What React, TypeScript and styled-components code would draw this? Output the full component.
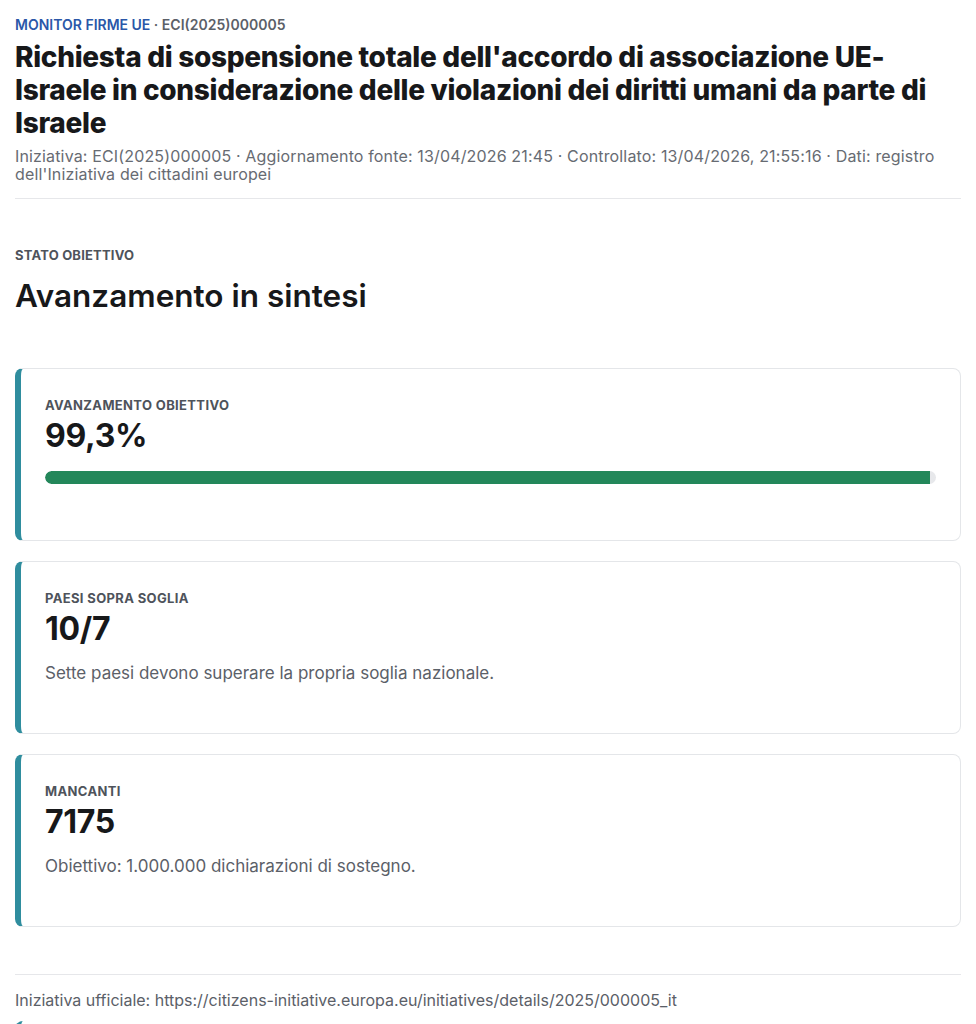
import styled, { createGlobalStyle } from 'styled-components';

const GlobalStyle = createGlobalStyle`
  body {
    margin: 0;
    background: #ffffff;
    font-family: Inter, "Noto Sans", sans-serif;
    color: #17181a;
  }
`;

const Page = styled.div`
  padding: 16px 15px 0 15px;
`;

const Eyebrow = styled.div`
  font-size: 14px;
  font-weight: 600;
  color: #5b6068;
  line-height: 18px;
  span { color: #2a57a8; }
`;

const Title = styled.h1`
  margin: 7px 0 0;
  font-size: 28px;
  font-weight: 800;
  line-height: 33px;
  letter-spacing: -0.3px;
  color: #17181a;
`;

const Meta = styled.p`
  margin: 7px 0 0;
  font-size: 16px;
  line-height: 18px;
  letter-spacing: 0.15px;
  color: #676b72;
`;

const Divider = styled.hr`
  border: 0;
  border-top: 1px solid #e6e7ea;
  margin: 15px 0 0;
`;

const Section = styled.section`
  margin-top: 48px;
`;

const Kicker = styled.div`
  font-size: 13px;
  font-weight: 700;
  color: #4e535b;
  line-height: 16px;
  letter-spacing: 0.2px;
`;

const SectionTitle = styled.h2`
  margin: 14px 0 0;
  font-size: 31.5px;
  font-weight: 600;
  line-height: 38px;
  color: #17181a;
`;

const Cards = styled.div`
  display: flex;
  flex-direction: column;
  gap: 20px;
  margin-top: 53px;
`;

const Card = styled.div`
  min-height: 173px;
  box-sizing: border-box;
  border: 1px solid #e4e6e9;
  border-left: 6px solid #2f8d9e;
  border-radius: 8px;
  padding: 28px 24px 24px 24px;
  background: #fff;
`;

const Label = styled.div`
  font-size: 13px;
  font-weight: 700;
  color: #4e535b;
  line-height: 16px;
  letter-spacing: 0.35px;
  text-transform: uppercase;
`;

const Value = styled.div`
  margin-top: 4px;
  font-size: 32px;
  font-weight: 700;
  line-height: 38px;
  letter-spacing: -0.3px;
  color: #17181a;
`;

const Track = styled.div`
  margin-top: 16px;
  height: 13px;
  border-radius: 7px;
  background: #e7e8eb;
  overflow: hidden;
`;

const Fill = styled.div`
  height: 100%;
  background: #23875a;
  border-radius: 7px 0 0 7px;
`;

const Desc = styled.p`
  margin: 14px 0 0;
  font-size: 17px;
  line-height: 22px;
  color: #5b6068;
`;

const Footer = styled.footer`
  margin-top: 47px;
  border-top: 1px solid #e6e7ea;
  padding-top: 16px;
  font-size: 16px;
  line-height: 18px;
  color: #5b6068;
`;

const NextCard = styled.div`
  margin-top: 12px;
  height: 40px;
  border-left: 6px solid #2f8d9e;
  border-radius: 8px 0 0 0;
`;

const stats = [
  { label: 'Paesi sopra soglia', value: '10/7', desc: 'Sette paesi devono superare la propria soglia nazionale.' },
  { label: 'Mancanti', value: '7175', desc: 'Obiettivo: 1.000.000 dichiarazioni di sostegno.' },
];

export default function App() {
  const progress = 99.3;
  return (
    <>
      <GlobalStyle />
      <Page>
        <Eyebrow><span>MONITOR FIRME UE</span> · ECI(2025)000005</Eyebrow>
        <Title>Richiesta di sospensione totale dell'accordo di associazione UE-Israele in considerazione delle violazioni dei diritti umani da parte di Israele</Title>
        <Meta>
          Iniziativa: ECI(2025)000005 · Aggiornamento fonte: 13/04/2026 21:45 · Controllato: 13/04/2026, 21:55:16 · Dati: registro dell'Iniziativa dei cittadini europei
        </Meta>
        <Divider />
        <Section>
          <Kicker>STATO OBIETTIVO</Kicker>
          <SectionTitle>Avanzamento in sintesi</SectionTitle>
          <Cards>
            <Card>
              <Label>Avanzamento obiettivo</Label>
              <Value>99,3%</Value>
              <Track>
                <Fill style={{ width: `${progress}%` }} />
              </Track>
            </Card>
            {stats.map(s => (
              <Card key={s.label}>
                <Label>{s.label}</Label>
                <Value>{s.value}</Value>
                <Desc>{s.desc}</Desc>
              </Card>
            ))}
          </Cards>
        </Section>
        <Footer>
          Iniziativa ufficiale: https://citizens-initiative.europa.eu/initiatives/details/2025/000005_it
          <NextCard />
        </Footer>
      </Page>
    </>
  );
}
